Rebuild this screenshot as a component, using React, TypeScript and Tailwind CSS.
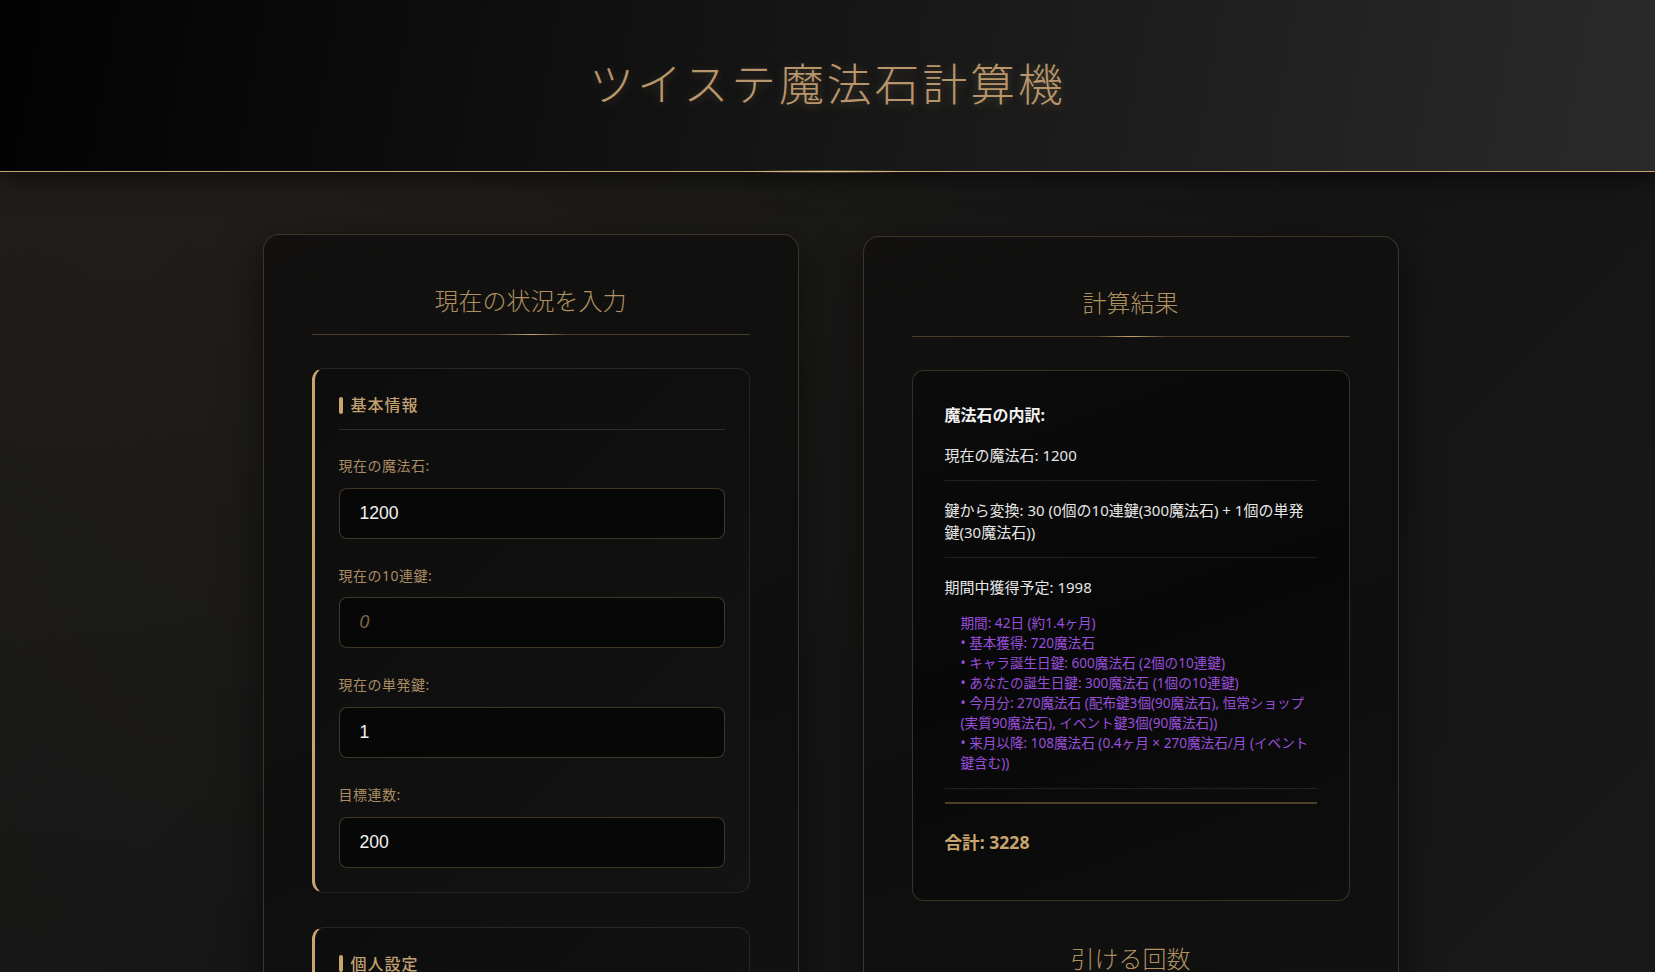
const gold = '#c9a46c'

function SectionTitle({ children }: { children: string }) {
  return (
    <div className="relative mb-[33px] border-b border-[#c9a46c]/30 pb-[15px]">
      <h2 className="text-center text-[24px] leading-[36px] font-light text-[#b0915f]">
        {children}
      </h2>
      <div className="absolute left-1/2 -bottom-px h-px w-[70px] -translate-x-1/2 bg-[linear-gradient(90deg,transparent,#c9a46c,transparent)]" />
    </div>
  )
}

function Field({ label, value, placeholder }: { label: string; value?: string; placeholder?: string }) {
  return (
    <div>
      <label className="mb-[12.5px] block text-[14px] leading-[19px] tracking-[0.5px] text-[#a98c63]">{label}</label>
      <input
        type="text"
        defaultValue={value}
        placeholder={placeholder}
        className="h-[51px] w-full rounded-[8px] border border-[#c9a46c]/30 bg-[#070707] px-5 font-['Liberation_Sans',Arial,sans-serif] text-[17.6px] text-[#f2f2f2] outline-none placeholder:italic placeholder:text-[#7d6748]"
      />
    </div>
  )
}

function InputSection({ title, children }: { title: string; children: React.ReactNode }) {
  return (
    <div className="rounded-[12px] border border-[#c9a46c]/15 border-l-[3px] border-l-[#c9a46c] bg-[linear-gradient(135deg,#0d0d0d,#131313)] p-6">
      <h3 className="mb-[26px] flex items-center border-b border-[#c9a46c]/20 pb-[12px] text-[16px] leading-[24px] font-medium tracking-[1px] text-[#c2a171]">
        <span className="mr-2 inline-block h-[17px] w-1 rounded-sm bg-[#c9a46c]" />
        {title}
      </h3>
      <div className="flex flex-col gap-[27.2px]">{children}</div>
    </div>
  )
}

const details = [
  '期間: 42日 (約1.4ヶ月)',
  '• 基本獲得: 720魔法石',
  '• キャラ誕生日鍵: 600魔法石 (2個の10連鍵)',
  '• あなたの誕生日鍵: 300魔法石 (1個の10連鍵)',
  '• 今月分: 270魔法石 (配布鍵3個(90魔法石), 恒常ショップ(実質90魔法石), イベント鍵3個(90魔法石))',
  '• 来月以降: 108魔法石 (0.4ヶ月 × 270魔法石/月 (イベント鍵含む))',
]

export default function App() {
  return (
    <div className="min-h-screen bg-[radial-gradient(ellipse_at_15%_0%,rgba(201,164,108,0.05),transparent_55%),linear-gradient(135deg,#1a1917,#151515_50%,#1a1a1a)] font-['Noto_Sans','Noto_Sans_CJK_JP',sans-serif]">
      <header className="relative border-b border-[#c9a46c] bg-[linear-gradient(100deg,#020202,#141414_45%,#2a2a2a)] pt-[55px] pb-[62px] shadow-[0_6px_24px_rgba(0,0,0,0.6)]">
        <h1 className="text-center font-['Noto_Sans_CJK_JP',sans-serif] text-[44.8px] leading-[54px] font-extralight tracking-[3px] text-[#b8956a] [text-shadow:0_2px_10px_rgba(201,164,108,0.25)]">
          ツイステ魔法石計算機
        </h1>
        <div className="absolute left-1/2 -bottom-[2px] h-[3px] w-[200px] -translate-x-1/2 bg-[radial-gradient(ellipse_at_center,rgba(230,195,140,0.9),transparent_70%)]" />
      </header>

      <main className="mx-auto grid max-w-[1200px] grid-cols-2 gap-16 pt-[62px] pr-[29px] pb-16 pl-[35px]">
        <section className="rounded-[16px] border border-[#c9a46c]/25 bg-[linear-gradient(160deg,#121110,#0f0f0f_50%,#131313)] p-12 shadow-[0_12px_40px_rgba(0,0,0,0.55)]">
          <SectionTitle>現在の状況を入力</SectionTitle>
          <InputSection title="基本情報">
            <Field label="現在の魔法石:" value="1200" />
            <Field label="現在の10連鍵:" placeholder="0" />
            <Field label="現在の単発鍵:" value="1" />
            <Field label="目標連数:" value="200" />
          </InputSection>
          <div className="mt-[34px]">
            <InputSection title="個人設定">
              <Field label="あなたの誕生日:" value="2024-05-01" />
              <Field label="目標日:" value="2024-06-11" />
            </InputSection>
          </div>
        </section>

        <section className="mt-[2px] rounded-[16px] border border-[#c9a46c]/25 bg-[linear-gradient(160deg,#121110,#0f0f0f_50%,#131313)] p-12 shadow-[0_12px_40px_rgba(0,0,0,0.55)]">
          <SectionTitle>計算結果</SectionTitle>
          <div className="rounded-[12px] border border-[#c9a46c]/25 bg-[linear-gradient(160deg,#0b0b0b,#080808_50%,#0e0e0e)] p-8">
            <h4 className="text-[16px] leading-[25.6px] font-bold text-[#f2f2f2]">魔法石の内訳:</h4>
            <p className="mt-[15.4px] border-b border-[#c9a46c]/15 pb-[14px] text-[15px] leading-[22px] text-[#e6e6e6]">
              現在の魔法石: 1200
            </p>
            <p className="border-b border-[#c9a46c]/15 pt-[18px] pb-[14px] text-[15px] leading-[22px] text-[#e6e6e6]">
              鍵から変換: 30 (0個の10連鍵(300魔法石) + 1個の単発鍵(30魔法石))
            </p>
            <div className="border-b border-[#c9a46c]/15 pt-[18px] pb-[15px]">
              <p className="text-[15px] leading-[22px] text-[#e6e6e6]">期間中獲得予定: 1998</p>
              <div className="mt-[15px] pl-4 text-[13.6px] leading-[20px] text-[#9a4fdc]">
                {details.map((d) => (
                  <div key={d}>{d}</div>
                ))}
              </div>
            </div>
            <p className="mt-[13px] border-t-2 border-[#c9a46c]/35 pt-[24px] pb-[12px] text-[17.6px] leading-[28px] font-bold" style={{ color: gold }}>
              合計: 3228
            </p>
          </div>

          <div className="mt-10">
            <SectionTitle>引ける回数</SectionTitle>
            <div className="rounded-[12px] border border-[#c9a46c]/25 bg-[#0a0a0a] p-8 text-[15px] text-[#e6e6e6]">
              <p>合計魔法石: 3228</p>
              <p className="mt-2">引ける回数: 107連</p>
            </div>
          </div>
        </section>
      </main>
    </div>
  )
}
